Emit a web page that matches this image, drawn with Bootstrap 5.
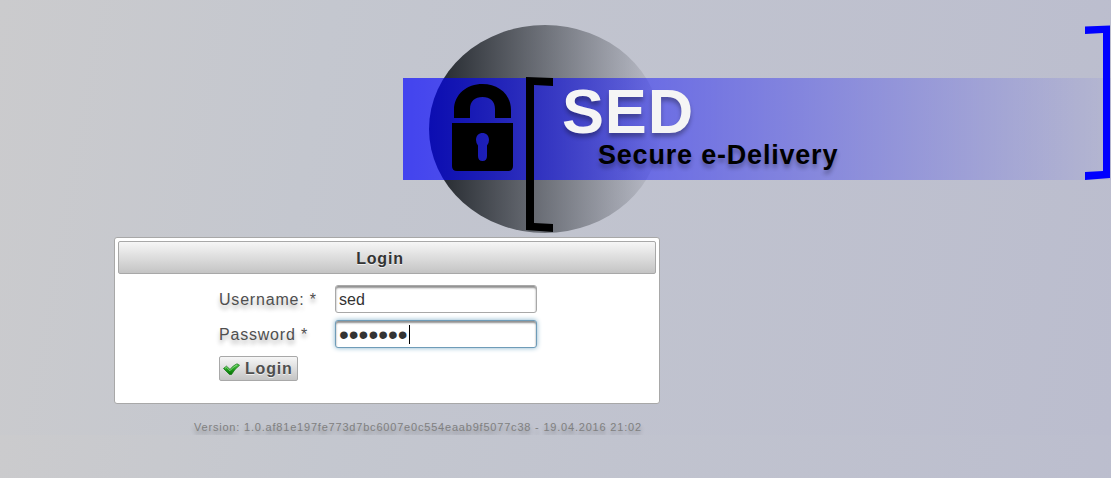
<!DOCTYPE html>
<html lang="en">
<head>
<meta charset="utf-8">
<meta name="viewport" content="width=device-width, initial-scale=1">
<title>SED - Secure e-Delivery</title>
<link href="https://cdn.jsdelivr.net/npm/bootstrap@5.3.0/dist/css/bootstrap.min.css" rel="stylesheet">
<style>
  body {
    --soft-shadow: 0 4px 4px rgba(0, 0, 0, .3);
    font: 16px/20px "Liberation Sans", Arial, sans-serif;
    letter-spacing: .05em;
    color: #4f4f4f;
    background: linear-gradient(100deg, #cbcbcd 0%, #c4c7cf 28%, #bbbdce 100%);
  }
  /* Every layer of the banner shares one grid cell */
  .banner { padding-left: 403px; height: 237px; grid-template-columns: minmax(0, 1fr); }
  .banner > * { grid-area: 1 / 1; }
  .band {
    margin-top: 78px;
    height: 102px;
    background: linear-gradient(90deg, rgba(0, 0, 255, .66), rgba(0, 0, 255, .04));
  }
  .brand-text {
    margin-top: 78px;
    padding-left: 159px;
    font-weight: bold;
    text-shadow: var(--soft-shadow);
  }
  .brand-name { font-size: 63px; line-height: 66px; color: #f5f5f5; }
  .brand-sub { font-size: 27px; line-height: 22px; padding-left: 36px; color: #000; }
  .login-area { margin-left: 114px; max-width: 546px; }
  .login-panel { border: 1px solid #a8a8a8; border-radius: 3px; padding: 3px 3px 22px; }
  .login-head {
    border: 1px solid #a8a8a8;
    border-radius: 2px;
    padding: 7px 14px 4px 0;
    font-size: 16px;
    line-height: 20px;
    color: #333;
    background: linear-gradient(#f6f6f6, #c4c4c4);
    text-shadow: 0 1px 0 rgba(255, 255, 255, .7);
  }
  .login-fields { padding: 11px 0 0 101px; row-gap: 7px; }
  .field-label { width: 116px; padding-top: 2px; text-shadow: var(--soft-shadow); }
  .field-box {
    width: 202px;
    height: 28px;
    padding: 4px 3px 2px;
    border: 1px solid #a8a8a8;
    border-radius: 3px;
    background: #fff;
    color: #333;
    box-shadow: inset 0 2px 2px #8f8f8f;
    outline: 0;
  }
  .field-box[type=password] { font-size: 28px; line-height: 20px; caret-color: transparent; }
  .field-box:focus { border-color: #6f9cb8; box-shadow: inset 0 2px 2px #8f8f8f, 0 0 5px #85b2cb; }
  .text-cursor { left: 74px; top: 5px; width: 1px; height: 19px; background: #000; }
  .login-btn {
    height: 25px;
    margin-top: 1px;
    padding: 0 4px 0 3px;
    gap: 5px;
    border: 1px solid #a8a8a8;
    border-radius: 2px;
    color: #4f4f4f;
    background: linear-gradient(#f6f6f6, #c4c4c4);
    letter-spacing: .05em;
    text-shadow: 0 1px 0 rgba(255, 255, 255, .7);
  }
  .version-line { padding: 16px 0 0 80px; text-shadow: var(--soft-shadow); font-size: 11px; line-height: 15px; color: #808080; }
</style>
</head>
<body>
<header class="banner d-grid">
  <svg width="260" height="237" aria-hidden="true">
    <defs><linearGradient id="disc"><stop offset="0" stop-color="#00050a" stop-opacity=".84"/><stop offset="1" stop-color="#00050a" stop-opacity=".02"/></linearGradient></defs>
    <ellipse cx="142" cy="129" rx="116" ry="104" fill="url(#disc)"/>
  </svg>
  <div class="band"></div>
  <svg width="160" height="237" aria-hidden="true">
    <path d="M51 118V110C51 94 64 84 79.500 84S108 94 108 110V118H92V109C92 101 87 97 79.500 97S67 101 67 109V118Z"/>
    <path fill-rule="evenodd" d="M49 123H110V166Q110 171 105 171H54Q49 171 49 166ZM75 145.500V156Q75 161 79.500 161T84 156V145.500Q86 143 86 140C86 135.500 83 133 79.500 133S73 135.500 73 140Q73 143 75 145.500Z"/>
    <path d="M123 77L150 78V86L131 85V223L150 224V232L123 230Z"/>
  </svg>
  <div class="brand-text">
    <div class="brand-name">SED</div>
    <div class="brand-sub">Secure e-Delivery</div>
  </div>
  <svg class="ms-auto" width="27" height="237" aria-hidden="true">
    <path fill="#00f" d="M1 26.500L26 25.500V178L1 180V172L19 171V33L1 34Z"/>
  </svg>
</header>
<main class="login-area">
  <form class="login-panel bg-white" onsubmit="return false">
    <h1 class="login-head text-center fw-bold m-0">Login</h1>
    <div class="login-fields d-flex flex-column align-items-start">
      <div class="d-flex align-items-center">
        <label class="field-label" for="username">Username: *</label>
        <input class="field-box" id="username" type="text" value="sed">
      </div>
      <div class="d-flex align-items-center">
        <label class="field-label" for="password">Password *</label>
        <div class="d-flex position-relative">
          <input class="field-box" id="password" type="password" value="sedsedx" autofocus>
          <span class="text-cursor position-absolute"></span>
        </div>
      </div>
      <button class="login-btn d-flex align-items-center fw-bold" type="submit">
        <svg width="17" height="16" viewBox="0 0 17 16" aria-hidden="true">
          <defs><linearGradient id="tick" x2="0" y2="1"><stop stop-color="#5fd05a"/><stop offset=".5" stop-color="#22a01e"/><stop offset="1" stop-color="#067004"/></linearGradient></defs>
          <path d="M.5 7.500L3.500 5.200L7 8.500Q10 4.500 14 2.800L16.500 4.300Q11.500 8 8.500 13.500H6.500Z" fill="url(#tick)" stroke="#187a16" stroke-width=".8" stroke-linejoin="round"/>
          <path d="M2 7.300L3.500 6.300L7 9.700Q10 5.700 14 3.800" fill="none" stroke="#a5e8a0" stroke-width=".7"/>
        </svg>
        Login
      </button>
    </div>
  </form>
  <footer class="version-line text-nowrap">Version: 1.0.af81e197fe773d7bc6007e0c554eaab9f5077c38 - 19.04.2016 21:02</footer>
</main>
<script src="https://cdn.jsdelivr.net/npm/bootstrap@5.3.0/dist/js/bootstrap.bundle.min.js"></script>
</body>
</html>
